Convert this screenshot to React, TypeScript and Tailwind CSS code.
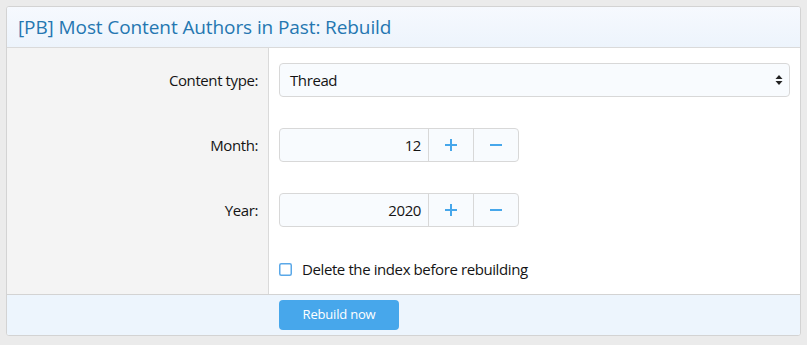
import React from "react";

const font = { fontFamily: '"Open Sans", "Noto Sans", Arial, sans-serif' };

function Stepper({ value }: { value: string }) {
  return (
    <div className="flex h-[34px] w-[240px] rounded-[4px] border border-[#d8d8d8] bg-[#f8fbfe]">
      <div className="flex flex-1 items-center justify-end pr-[7px] text-[15px] tracking-[-0.4px] text-[#141414]">{value}</div>
      <div className="flex w-[45px] items-center justify-center border-l border-[#d8d8d8]">
        <svg width="14" height="14" viewBox="0 0 14 14">
          <path d="M7 1v12M1 7h12" stroke="#47a7eb" strokeWidth="2" />
        </svg>
      </div>
      <div className="flex w-[45px] items-center justify-center border-l border-[#d8d8d8]">
        <svg width="14" height="14" viewBox="0 0 14 14">
          <path d="M1 7h12" stroke="#47a7eb" strokeWidth="2" />
        </svg>
      </div>
    </div>
  );
}

function Row({ label, pt, children }: { label: string; pt: string; children: React.ReactNode }) {
  return (
    <div className="flex">
      <div className={`w-[262px] shrink-0 border-r border-[#dadada] bg-[#f4f4f4] ${pt}`}>
        <div className="flex h-[34px] items-center justify-end pr-[10px] text-[15px] tracking-[-0.4px] text-[#141414]">{label}</div>
      </div>
      <div className={`flex-1 pl-[10px] pr-[10px] ${pt}`}>{children}</div>
    </div>
  );
}

export default function App() {
  return (
    <div className="h-[345px] w-[807px] bg-[#ebebeb] px-[6px] pt-[6px]" style={font}>
      <div className="overflow-hidden rounded-[3px] border border-[#d3d3d3] bg-white">
        <div className="flex h-[41px] items-center border-b border-[#dadada] bg-gradient-to-b from-[#f6f9fe] to-[#edf4fc] pl-[11px]">
          <h2 className="text-[19px] tracking-[-0.1px] text-[#2577b1]">[PB] Most Content Authors in Past: Rebuild</h2>
        </div>
        <Row label="Content type:" pt="pt-[15px]">
          <div className="flex h-[34px] items-center justify-between rounded-[4px] border border-[#d8d8d8] bg-[#f8fbfe] pl-[10px] pr-[6px] text-[15px] tracking-[-0.4px] text-[#141414]">
            <span>Thread</span>
            <svg width="8" height="12" viewBox="0 0 8 12">
              <path d="M4 1L7.5 5H0.5Z M4 11L7.5 7H0.5Z" fill="#222" />
            </svg>
          </div>
        </Row>
        <Row label="Month:" pt="pt-[31px]">
          <Stepper value="12" />
        </Row>
        <Row label="Year:" pt="pt-[31px]">
          <Stepper value="2020" />
        </Row>
        <div className="flex">
          <div className="w-[262px] shrink-0 border-r border-[#dadada] bg-[#f4f4f4]" />
          <div className="flex-1 pb-[15px] pl-[10px] pt-[32px]">
            <div className="flex h-[20px] items-center text-[15px] tracking-[-0.4px] text-[#141414]">
              <svg width="13" height="13" viewBox="0 0 13 13" className="mr-[10px] shrink-0">
                <rect x="0.75" y="0.75" width="11.5" height="11.5" rx="1.5" fill="#ffffff" stroke="#5aa8e8" strokeWidth="1.5" />
              </svg>
              <span>Delete the index before rebuilding</span>
            </div>
          </div>
        </div>
        <div className="flex border-t border-[#d3d3d3] bg-[#edf5fd] py-[5px] pl-[272px]">
          <button className="h-[30px] w-[120px] rounded-[4px] bg-[#47a7eb] text-[13px] tracking-[-0.2px] text-white">Rebuild now</button>
        </div>
      </div>
    </div>
  );
}
